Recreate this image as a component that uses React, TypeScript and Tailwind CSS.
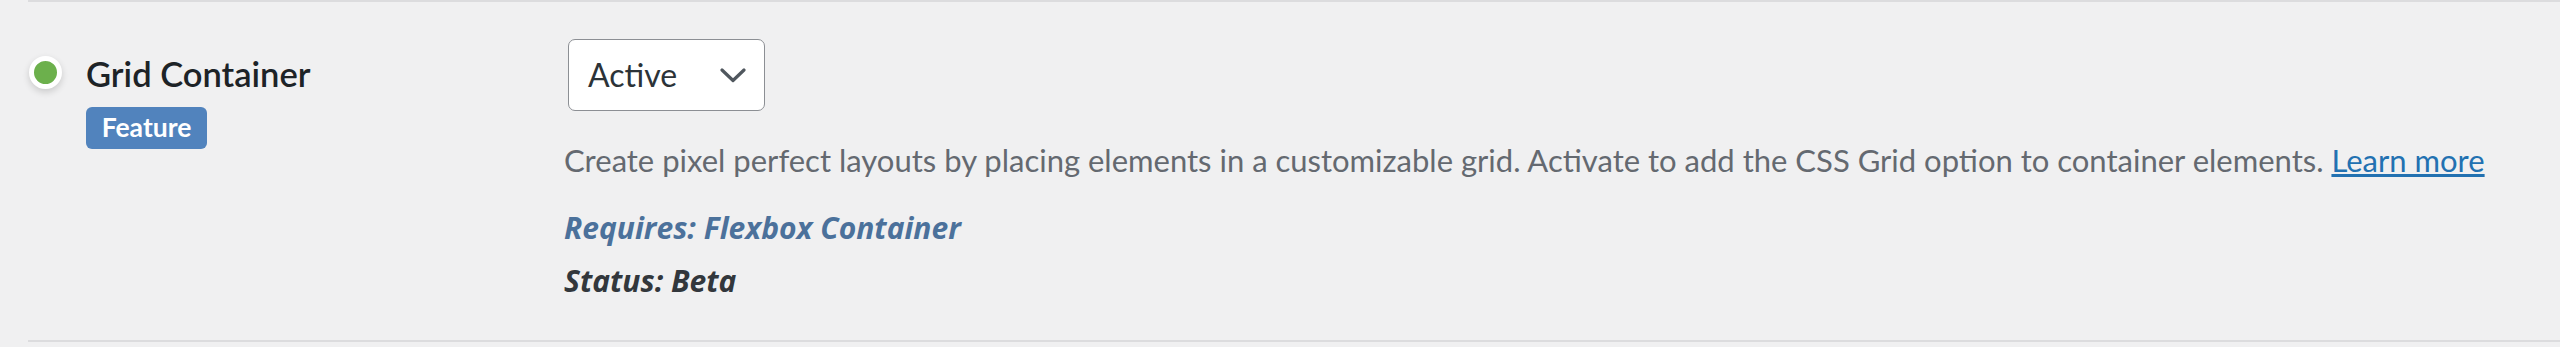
import React from "react";

const ChevronDown = () => (
  <svg width="26" height="15" viewBox="0 0 26 15" fill="none">
    <polyline points="2,2 13,12.5 24,2" stroke="#50575e" strokeWidth="3.2" strokeLinecap="round" strokeLinejoin="round" />
  </svg>
);

export default function App() {
  return (
    <div className="h-[347px] w-full overflow-hidden bg-[#f0f0f1] font-[Lato,sans-serif]">
      <div className="ml-[28px] flex h-[342px] border-y-2 border-[#dcdcde]">
        {/* left: status dot + title + tag */}
        <div className="w-[536px] shrink-0 pt-[50.6px]">
          <div className="flex items-start gap-[24px]">
            <span className="mt-[3px] ml-[1px] block h-[33px] w-[33px] shrink-0 rounded-full border-[5px] border-white bg-[#6cb04c] shadow-[0_3px_7px_rgba(0,0,0,0.16)]" />
            <div>
              <h3 className="text-[34.5px] leading-[41.4px] font-semibold text-[#1d2327]">Grid Container</h3>
              <span className="mt-[12.7px] inline-flex h-[42px] w-[121px] items-center justify-center rounded-[6px] bg-[#5183bd] text-[26.5px] font-bold text-white">
                Feature
              </span>
            </div>
          </div>
        </div>

        {/* right: select + description */}
        <div className="pt-[37px]">
          <div className="ml-[4px] flex h-[72px] w-[197px] items-center justify-between rounded-[7px] border-[1.5px] border-[#8c8f94] bg-white pr-[18px] pl-[19px]">
            <span className="text-[32px] text-[#2c3338]">Active</span>
            <ChevronDown />
          </div>
          <p className="mt-[25.75px] text-[31px] leading-[46.5px] whitespace-nowrap text-[#646970]">
            Create pixel perfect layouts by placing elements in a customizable grid. Activate to add the CSS Grid option to container elements.{" "}
            <a href="#" className="text-[#2271b1] underline">Learn more</a>
          </p>
          <p className="mt-[25px] font-['Open_Sans',sans-serif] text-[30px] leading-[40px] font-bold text-[#4b719b] italic">
            Requires: Flexbox Container
          </p>
          <p className="mt-[13px] font-['Open_Sans',sans-serif] text-[30px] leading-[40px] font-bold text-[#32373c] italic">
            Status: Beta
          </p>
        </div>
      </div>
    </div>
  );
}
